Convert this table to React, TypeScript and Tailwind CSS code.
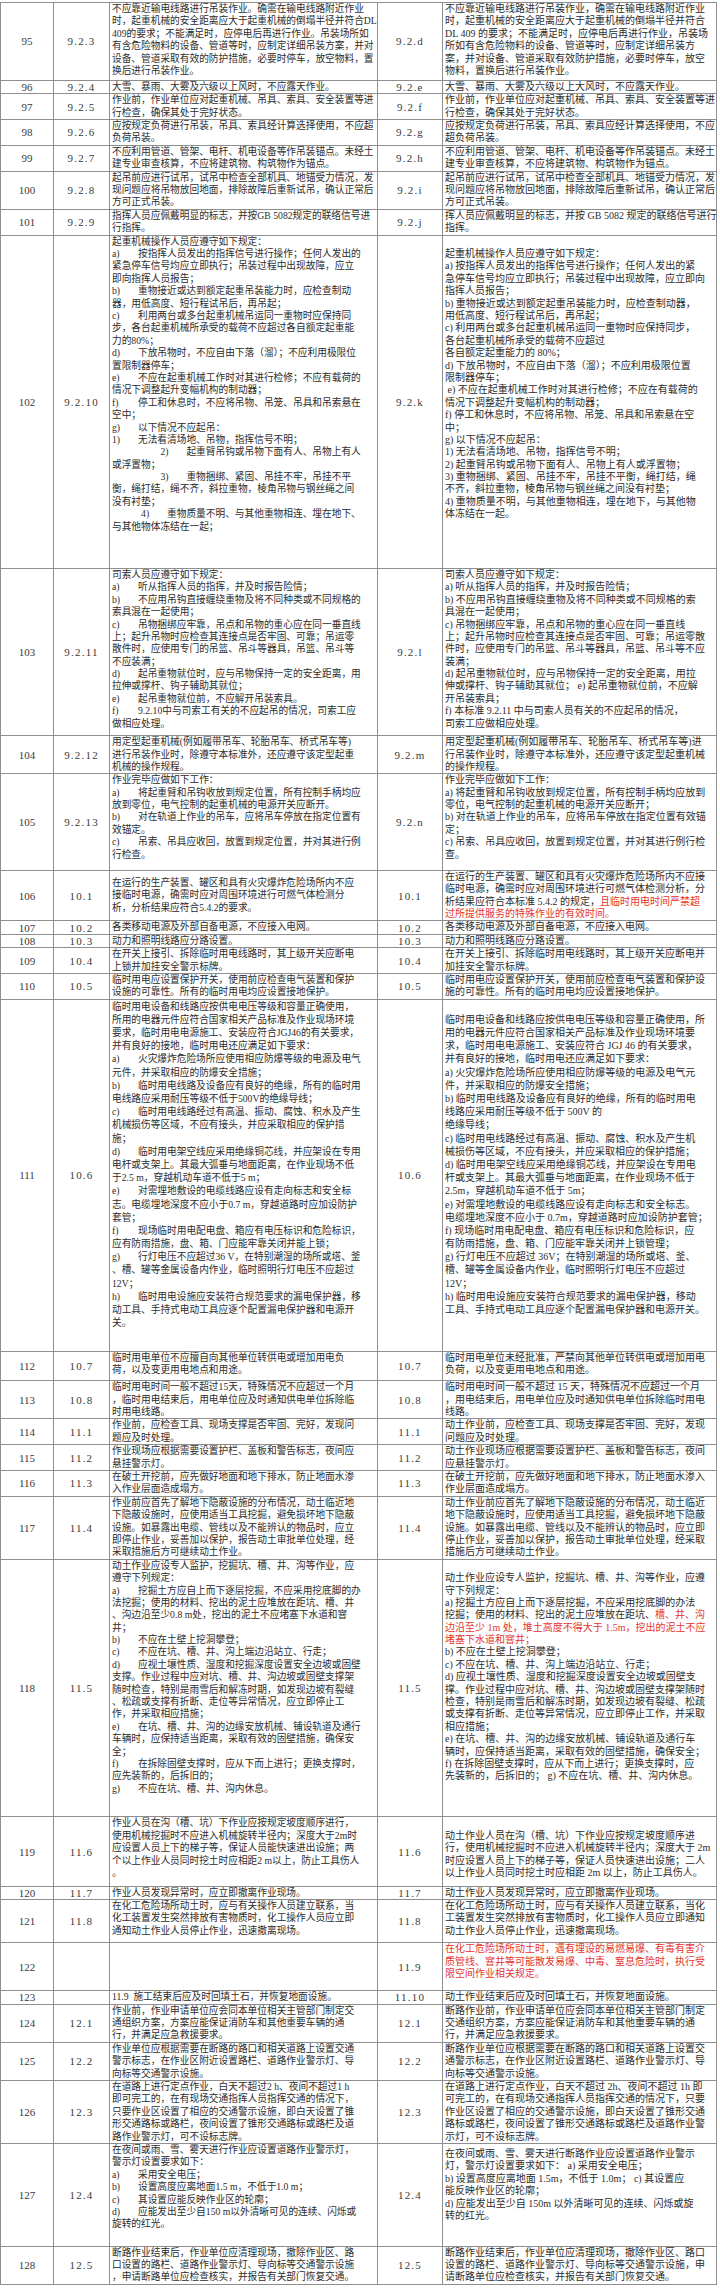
import React from "react";

type Row = {
  n: string;
  a: string;
  b: string;
  l: string[];
  r: string[];
  h?: number; // minimum row height, in line slots
  lh?: number; // line spacing for this row
  lc?: boolean; // centre the left text vertically
  rt?: boolean; // small top offset on the right text
};

const LH = 12.4;

const rows: Row[] = [
  {
    n: "95", a: "9.2.3", b: "9.2.d",
    l: [
      "不应靠近输电线路进行吊装作业。确需在输电线路附近作业",
      "时，起重机械的安全距离应大于起重机械的倒塌半径并符合DL",
      "409的要求；不能满足时，应停电后再进行作业。吊装场所如",
      "有含危险物料的设备、管道等时，应制定详细吊装方案，并对",
      "设备、管道采取有效的防护措施，必要时停车，放空物料，置",
      "换后进行吊装作业。",
    ],
    r: [
      "不应靠近输电线路进行吊装作业，确需在输电线路附近作业",
      "时，起重机械的安全距离应大于起重机械的倒塌半径并符合",
      "DL 409 的要求；不能满足时，应停电后再进行作业，吊装场",
      "所如有含危险物料的设备、管道等时，应制定详细吊装方",
      "案，并对设备、管道采取有效防护措施，必要时停车，放空",
      "物料，置换后进行吊装作业。",
    ],
    h: 6.2,
  },
  {
    n: "96", a: "9.2.4", b: "9.2.e",
    l: ["大雪、暴雨、大雾及六级以上风时，不应露天作业。"],
    r: ["大雪、暴雨、大雾及六级以上大风时，不应露天作业。"],
  },
  {
    n: "97", a: "9.2.5", b: "9.2.f",
    l: ["作业前，作业单位应对起重机械、吊具、索具、安全装置等进", "行检查，确保其处于完好状态。"],
    r: ["作业前，作业单位应对起重机械、吊具、索具、安全装置等进", "行检查，确保其处于完好状态。"],
  },
  {
    n: "98", a: "9.2.6", b: "9.2.g",
    l: ["应按规定负荷进行吊装，吊具、索具经计算选择使用，不应超", "负荷吊装。"],
    r: ["应按规定负荷进行吊装，吊具、索具应经计算选择使用，不应", "超负荷吊装。"],
  },
  {
    n: "99", a: "9.2.7", b: "9.2.h",
    l: ["不应利用管道、管架、电杆、机电设备等作吊装锚点。未经土", "建专业审查核算，不应将建筑物、构筑物作为锚点。"],
    r: ["不应利用管道、管架、电杆、机电设备等作吊装锚点。未经土", "建专业审查核算，不应将建筑物、构筑物作为锚点。"],
  },
  {
    n: "100", a: "9.2.8", b: "9.2.i",
    l: [
      "起吊前应进行试吊，试吊中检查全部机具、地锚受力情况，发",
      "现问题应将吊物放回地面，排除故障后重新试吊，确认正常后",
      "方可正式吊装。",
    ],
    r: [
      "起吊前应进行试吊，试吊中检查全部机具、地锚受力情况，发",
      "现问题应将吊物放回地面，排除故障后重新试吊，确认正常后",
      "方可正式吊装。",
    ],
  },
  {
    n: "101", a: "9.2.9", b: "9.2.j",
    l: ["指挥人员应佩戴明显的标志，并按GB 5082规定的联络信号进", "行指挥。"],
    r: ["挥人员应佩戴明显的标志，并按 GB 5082 规定的联络信号进行", "指挥。"],
  },
  {
    n: "102", a: "9.2.10", b: "9.2.k",
    l: [
      "起重机械操作人员应遵守如下规定：",
      "a)    按指挥人员发出的指挥信号进行操作；任何人发出的",
      "紧急停车信号均应立即执行；吊装过程中出现故障，应立",
      "即向指挥人员报告；",
      "b)    重物接近或达到额定起重吊装能力时，应检查制动",
      "器，用低高度、短行程试吊后，再吊起；",
      "c)    利用两台或多台起重机械吊运同一重物时应保持同",
      "步，各台起重机械所承受的载荷不应超过各自额定起重能",
      "力的80%；",
      "d)    下放吊物时，不应自由下落（溜）；不应利用极限位",
      "置限制器停车；",
      "e)    不应在起重机械工作时对其进行检修；不应有载荷的",
      "情况下调整起升变幅机构的制动器；",
      "f)    停工和休息时，不应将吊物、吊笼、吊具和吊索悬在",
      "空中；",
      "g)    以下情况不应起吊：",
      "1)    无法看清场地、吊物，指挥信号不明；",
      "　　　　　2)    起重臂吊钩或吊物下面有人、吊物上有人",
      "或浮置物；",
      "　　　　　3)    重物捆绑、紧固、吊挂不牢，吊挂不平",
      "衡，绳打结，绳不齐，斜拉重物，棱角吊物与钢丝绳之间",
      "没有衬垫；",
      "　　　4)    重物质量不明、与其他重物相连、埋在地下、",
      "与其他物体冻结在一起；",
    ],
    r: [
      "",
      "起重机械操作人员应遵守如下规定：",
      "a) 按指挥人员发出的指挥信号进行操作；任何人发出的紧",
      "急停车信号均应立即执行；吊装过程中出现故障，应立即向",
      "指挥人员报告；",
      "b) 重物接近或达到额定起重吊装能力时，应检查制动器，",
      "用低高度、短行程试吊后，再吊起；",
      "c) 利用两台或多台起重机械吊运同一重物时应保持同步，",
      "各台起重机械所承受的载荷不应超过",
      "各自额定起重能力的 80%；",
      "d) 下放吊物时，不应自由下落（溜）；不应利用极限位置",
      "限制器停车；",
      " e) 不应在起重机械工作时对其进行检修；不应在有载荷的",
      "情况下调整起升变幅机构的制动器；",
      "f) 停工和休息时，不应将吊物、吊笼、吊具和吊索悬在空",
      "中；",
      "g) 以下情况不应起吊：",
      "1) 无法看清场地、吊物，指挥信号不明；",
      "2) 起重臂吊钩或吊物下面有人、吊物上有人或浮置物；",
      "3) 重物捆绑、紧固、吊挂不牢，吊挂不平衡，绳打结，绳",
      "不齐，斜拉重物，棱角吊物与钢丝绳之间没有衬垫；",
      "4) 重物质量不明，与其他重物相连，埋在地下，与其他物",
      "体冻结在一起。",
    ],
    h: 26.8,
  },
  {
    n: "103", a: "9.2.11", b: "9.2.l",
    l: [
      "司索人员应遵守如下规定：",
      "a)    听从指挥人员的指挥，并及时报告险情；",
      "b)    不应用吊钩直接缠绕重物及将不同种类或不同规格的",
      "索具混在一起使用；",
      "c)    吊物捆绑应牢靠，吊点和吊物的重心应在同一垂直线",
      "上；起升吊物时应检查其连接点是否牢固、可靠；吊运零",
      "散件时，应使用专门的吊篮、吊斗等器具，吊篮、吊斗等",
      "不应装满；",
      "d)    起吊重物就位时，应与吊物保持一定的安全距离，用",
      "拉伸或撑杆、钩子辅助其就位；",
      "e)    起吊重物就位前，不应解开吊装索具。",
      "f)    9.2.10中与司索工有关的不应起吊的情况，司索工应",
      "做相应处理。",
    ],
    r: [
      "司索人员应遵守如下规定：",
      "a) 听从指挥人员的指挥，并及时报告险情；",
      "b) 不应用吊钩直接缠绕重物及将不同种类或不同规格的索",
      "具混在一起使用；",
      "c) 吊物捆绑应牢靠，吊点和吊物的重心应在同一垂直线",
      "上；起升吊物时应检查其连接点是否牢固、可靠；吊运零散",
      "件时，应使用专门的吊篮、吊斗等器具，吊篮、吊斗等不应",
      "装满；",
      "d) 起吊重物就位时，应与吊物保持一定的安全距离，用拉",
      "伸或撑杆、钩子辅助其就位； e) 起吊重物就位前，不应解",
      "开吊装索具；",
      "f) 本标准 9.2.11 中与司索人员有关的不应起吊的情况，",
      "司索工应做相应处理。",
    ],
    h: 13.4,
  },
  {
    n: "104", a: "9.2.12", b: "9.2.m",
    l: [
      "用定型起重机械(例如履带吊车、轮胎吊车、桥式吊车等)",
      "进行吊装作业时，除遵守本标准外，还应遵守该定型起重",
      "机械的操作规程。",
    ],
    r: [
      "用定型起重机械(例如履带吊车、轮胎吊车、桥式吊车等)进",
      "行吊装作业时，除遵守本标准外，还应遵守该定型起重机械",
      "的操作规程。",
    ],
  },
  {
    n: "105", a: "9.2.13", b: "9.2.n",
    l: [
      "作业完毕应做如下工作：",
      "a)    将起重臂和吊钩收放到规定位置，所有控制手柄均应",
      "放到零位，电气控制的起重机械的电源开关应断开。",
      "b)    对在轨道上作业的吊车，应将吊车停放在指定位置有",
      "效锚定。",
      "c)    吊索、吊具应收回，放置到规定位置，并对其进行例",
      "行检查。",
    ],
    r: [
      "作业完毕应做如下工作：",
      "a) 将起重臂和吊钩收放到规定位置，所有控制手柄均应放到",
      "零位，电气控制的起重机械的电源开关应断开；",
      "b) 对在轨道上作业的吊车，应将吊车停放在指定位置有效锚",
      "定；",
      "c) 吊索、吊具应收回，放置到规定位置，并对其进行例行检",
      "查。",
    ],
    h: 7.7,
  },
  {
    n: "106", a: "10.1", b: "10.1",
    l: [
      "在运行的生产装置、罐区和具有火灾爆炸危险场所内不应",
      "接临时电源，确需时应对周围环境进行可燃气体检测分",
      "析，分析结果应符合5.4.2的要求。",
    ],
    r: [
      "在运行的生产装置、罐区和具有火灾爆炸危险场所内不应接",
      "临时电源，确需时应对周围环境进行可燃气体检测分析，分",
      "析结果应符合本标准 5.4.2 的规定，§且临时用电时间严禁超",
      "§过所提供服务的特殊作业的有效时间。",
    ],
    h: 4,
    lc: true,
  },
  {
    n: "107", a: "10.2", b: "10.2",
    l: ["各类移动电源及外部自备电源，不应接入电网。"],
    r: ["各类移动电源及外部自备电源，不应接入电网。"],
  },
  {
    n: "108", a: "10.3", b: "10.3",
    l: ["动力和照明线路应分路设置。"],
    r: ["动力和照明线路应分路设置。"],
  },
  {
    n: "109", a: "10.4", b: "10.4",
    l: ["在开关上接引、拆除临时用电线路时，其上级开关应断电", "上锁并加挂安全警示标牌。"],
    r: ["在开关上接引、拆除临时用电线路时，其上级开关应断电并", "加挂安全警示标牌。"],
  },
  {
    n: "110", a: "10.5", b: "10.5",
    l: ["临时用电应设置保护开关，使用前应检查电气装置和保护", "设施的可靠性。所有的临时用电均应设置接地保护。"],
    r: ["临时用电应设置保护开关，使用前应检查电气装置和保护设", "施的可靠性。所有的临时用电均应设置接地保护。"],
  },
  {
    n: "111", a: "10.6", b: "10.6",
    l: [
      "临时用电设备和线路应按供电电压等级和容量正确使用，",
      "所用的电器元件应符合国家相关产品标准及作业现场环境",
      "要求，临时用电电源施工、安装应符合JGJ46的有关要求，",
      "并有良好的接地，临时用电还应满足如下要求：",
      "a)    火灾爆炸危险场所应使用相应防爆等级的电源及电气",
      "元件，并采取相应的防爆安全措施；",
      "b)    临时用电线路及设备应有良好的绝缘，所有的临时用",
      "电线路应采用耐压等级不低于500V的绝缘导线；",
      "c)    临时用电线路经过有高温、振动、腐蚀、积水及产生",
      "机械损伤等区域，不应有接头，并应采取相应的保护措",
      "施；",
      "d)    临时用电架空线应采用绝缘铜芯线，并应架设在专用",
      "电杆或支架上。其最大弧垂与地面距离，在作业现场不低",
      "于2.5 m，穿越机动车道不低于5 m；",
      "e)    对需埋地敷设的电缆线路应设有走向标志和安全标",
      "志。电缆埋地深度不应小于0.7 m，穿越道路时应加设防护",
      "套管；",
      "f)    现场临时用电配电盘、箱应有电压标识和危险标识，",
      "应有防雨措施，盘、箱、门应能牢靠关闭并能上锁；",
      "g)    行灯电压不应超过36 V，在特别潮湿的场所或塔、釜",
      "、槽、罐等金属设备内作业，临时照明行灯电压不应超过",
      "12V；",
      "h)    临时用电设施应安装符合规范要求的漏电保护器，移",
      "动工具、手持式电动工具应逐个配置漏电保护器和电源开",
      "关。",
    ],
    r: [
      "",
      "临时用电设备和线路应按供电电压等级和容量正确使用，所",
      "用的电器元件应符合国家相关产品标准及作业现场环境要",
      "求，临时用电电源施工、安装应符合 JGJ 46 的有关要求，",
      "并有良好的接地，临时用电还应满足如下要求：",
      "a) 火灾爆炸危险场所应使用相应防爆等级的电源及电气元",
      "件，并采取相应的防爆安全措施；",
      "b) 临时用电线路及设备应有良好的绝缘，所有的临时用电",
      "线路应采用耐压等级不低于 500V 的",
      "绝缘导线；",
      "c) 临时用电线路经过有高温、振动、腐蚀、积水及产生机",
      "械损伤等区域，不应有接头，并应采取相应的保护措施；",
      "d) 临时用电架空线应采用绝缘铜芯线，并应架设在专用电",
      "杆或支架上。其最大弧垂与地面距离，在作业现场不低于",
      "2.5m，穿越机动车道不低于 5m；",
      "e) 对需埋地敷设的电缆线路应设有走向标志和安全标志。",
      "电缆埋地深度不应小于 0.7m，穿越道路时应加设防护套管；",
      "f) 现场临时用电配电盘、箱应有电压标识和危险标识，应",
      "有防雨措施，盘、箱、门应能牢靠关闭并上锁管理；",
      "g) 行灯电压不应超过 36V；在特别潮湿的场所或塔、釜、",
      "槽、罐等金属设备内作业，临时照明行灯电压不应超过",
      "12V；",
      "h) 临时用电设施应安装符合规范要求的漏电保护器，移动",
      "工具、手持式电动工具应逐个配置漏电保护器和电源开关。",
    ],
    h: 28.3,
    lh: 13.2,
  },
  {
    n: "112", a: "10.7", b: "10.7",
    l: ["临时用电单位不应擅自向其他单位转供电或增加用电负", "荷，以及变更用电地点和用途。"],
    r: ["临时用电单位未经批准，严禁向其他单位转供电或增加用电", "负荷，以及变更用电地点和用途。"],
    h: 2.3,
  },
  {
    n: "113", a: "10.8", b: "10.8",
    l: [
      "临时用电时间一般不超过15天，特殊情况不应超过一个月",
      "，临时用电结束后，用电单位应及时通知供电单位拆除临",
      "时用电线路。",
    ],
    r: [
      "临时用电时间一般不超过 15 天，特殊情况不应超过一个月",
      "，用电结束后，用电单位应及时通知供电单位拆除临时用电",
      "线路。",
    ],
  },
  {
    n: "114", a: "11.1", b: "11.1",
    l: ["作业前，应检查工具、现场支撑是否牢固、完好，发现问", "题应及时处理。"],
    r: ["动土作业前，应检查工具、现场支撑是否牢固、完好，发现", "问题应及时处理。"],
  },
  {
    n: "115", a: "11.2", b: "11.2",
    l: ["作业现场应根据需要设置护栏、盖板和警告标志，夜间应", "悬挂警示灯。"],
    r: ["动土作业现场应根据需要设置护栏、盖板和警告标志，夜间", "应悬挂警示灯。"],
  },
  {
    n: "116", a: "11.3", b: "11.3",
    l: ["在破土开挖前，应先做好地面和地下排水，防止地面水渗", "入作业层面造成塌方。"],
    r: ["在破土开挖前，应先做好地面和地下排水，防止地面水渗入", "作业层面造成塌方。"],
  },
  {
    n: "117", a: "11.4", b: "11.4",
    l: [
      "作业前应首先了解地下隐蔽设施的分布情况，动土临近地",
      "下隐蔽设施时，应使用适当工具挖掘，避免损坏地下隐蔽",
      "设施。如暴露出电缆、管线以及不能辨认的物品时，应立",
      "即停止作业，妥善加以保护，报告动土审批单位处理，经",
      "采取措施后方可继续动土作业。",
    ],
    r: [
      "动土作业前应首先了解地下隐蔽设施的分布情况，动土临近",
      "地下隐蔽设施时，应使用适当工具挖掘，避免损坏地下隐蔽",
      "设施。如暴露出电缆、管线以及不能辨认的物品时，应立即",
      "停止作业，妥善加以保护，报告动土审批单位处理，经采取",
      "措施后方可继续动土作业。",
    ],
  },
  {
    n: "118", a: "11.5", b: "11.5",
    l: [
      "动土作业应设专人监护，挖掘坑、槽、井、沟等作业，应",
      "遵守下列规定：",
      "a)    挖掘土方应自上而下逐层挖掘，不应采用挖底脚的办",
      "法挖掘；使用的材料、挖出的泥土应堆放在距坑、槽、井",
      "、沟边沿至少0.8 m处，挖出的泥土不应堵塞下水道和窨",
      "井；",
      "b)    不应在土壁上挖洞攀登；",
      "c)    不应在坑、槽、井、沟上端边沿站立、行走；",
      "d)    应视土壤性质、湿度和挖掘深度设置安全边坡或固壁",
      "支撑。作业过程中应对坑、槽、井、沟边坡或固壁支撑架",
      "随时检查，特别是雨雪后和解冻时期，如发现边坡有裂缝",
      "、松疏或支撑有折断、走位等异常情况，应立即停止工",
      "作，并采取相应措施；",
      "e)    在坑、槽、井、沟的边缘安放机械、铺设轨道及通行",
      "车辆时，应保持适当距离，采取有效的固壁措施，确保安",
      "全；",
      "f)    在拆除固壁支撑时，应从下而上进行；更换支撑时，",
      "应先装新的，后拆旧的；",
      "g)    不应在坑、槽、井、沟内休息。",
    ],
    r: [
      "",
      "动土作业应设专人监护，挖掘坑、槽、井、沟等作业，应遵",
      "守下列规定：",
      "a) 挖掘土方应自上而下逐层挖掘，不应采用挖底脚的办法",
      "挖掘；使用的材料、挖出的泥土应堆放在距坑、§槽、井、沟",
      "§边沿至少 1m 处，堆土高度不得大于 1.5m，挖出的泥土不应",
      "§堵塞下水道和窨井；",
      "b) 不应在土壁上挖洞攀登；",
      "c) 不应在坑、槽、井、沟上端边沿站立、行走；",
      "d) 应视土壤性质、湿度和挖掘深度设置安全边坡或固壁支",
      "撑。作业过程中应对坑、槽、井、沟边坡或固壁支撑架随时",
      "检查，特别是雨雪后和解冻时期，如发现边坡有裂缝、松疏",
      "或支撑有折断、走位等异常情况，应立即停止工作，并采取",
      "相应措施；",
      "e) 在坑、槽、井、沟的边缘安放机械、铺设轨道及通行车",
      "辆时，应保持适当距离，采取有效的固壁措施，确保安全；",
      "f) 在拆除固壁支撑时，应从下而上进行；更换支撑时，应",
      "先装新的，后拆旧的； g) 不应在坑、槽、井、沟内休息。",
    ],
    h: 20.7,
  },
  {
    n: "119", a: "11.6", b: "11.6",
    l: [
      "作业人员在沟（槽、坑）下作业应按规定坡度顺序进行，",
      "使用机械挖掘时不应进入机械旋转半径内；深度大于2m时",
      "应设置人员上下的梯子等，保证人员能快速进出设施；两",
      "个以上作业人员同时挖土时应相距2 m以上，防止工具伤人",
      "。",
    ],
    r: [
      "",
      "动土作业人员在沟（槽、坑）下作业应按规定坡度顺序进",
      "行，使用机械挖掘时不应进入机械旋转半径内；深度大于 2m",
      "时应设置人员上下的梯子等，保证人员快速进出设施；二人",
      "以上作业人员同时挖土时应相距 2m 以上，防止工具伤人。",
    ],
    h: 5.5,
  },
  {
    n: "120", a: "11.7", b: "11.7",
    l: ["作业人员发现异常时，应立即撤离作业现场。"],
    r: ["动土作业人员发现异常时，应立即撤离作业现场。"],
  },
  {
    n: "121", a: "11.8", b: "11.8",
    l: [
      "在化工危险场所动土时，应与有关操作人员建立联系，当",
      "化工装置发生突然排放有害物质时，化工操作人员应立即",
      "通知动土作业人员停止作业，迅速撤离现场。",
    ],
    r: [
      "在化工危险场所动土时，应与有关操作人员建立联系，当化",
      "工装置发生突然排放有害物质时，化工操作人员应立即通知",
      "动土作业人员停止作业，迅速撤离现场。",
    ],
    h: 3.4,
  },
  {
    n: "122", a: "", b: "11.9",
    l: [],
    r: [
      "§在化工危险场所动土时，遇有埋设的易燃易爆、有毒有害介",
      "§质管线、窨井等可能散发易爆、中毒、窒息危险时，执行受",
      "§限空间作业相关规定。",
    ],
    h: 3.8,
  },
  {
    n: "123", a: "", b: "11.10",
    l: ["11.9  施工结束后应及时回填土石，并恢复地面设施。"],
    r: ["动土作业结束后应及时回填土石，并恢复地面设施。"],
  },
  {
    n: "124", a: "12.1", b: "12.1",
    l: [
      "作业前，作业申请单位应会同本单位相关主管部门制定交",
      "通组织方案，方案应能保证消防车和其他重要车辆的通",
      "行，并满足应急救援要求。",
    ],
    r: [
      "断路作业前，作业申请单位应会同本单位相关主管部门制定",
      "交通组织方案，方案应能保证消防车和其他重要车辆的通",
      "行，并满足应急救援要求。",
    ],
  },
  {
    n: "125", a: "12.2", b: "12.2",
    l: [
      "作业单位应根据需要在断路的路口和相关道路上设置交通",
      "警示标志，在作业区附近设置路栏、道路作业警示灯、导",
      "向标等交通警示设施。",
    ],
    r: [
      "断路作业单位应根据需要在断路的路口和相关道路上设置交",
      "通警示标志，在作业区附近设置路栏、道路作业警示灯、导",
      "向标等交通警示设施。",
    ],
  },
  {
    n: "126", a: "12.3", b: "12.3",
    l: [
      "在道路上进行定点作业，白天不超过2 h、夜间不超过1 h",
      "即可完工的，在有现场交通指挥人员指挥交通的情况下，",
      "只要作业区设置了相应的交通警示设施，即白天设置了锥",
      "形交通路标或路栏，夜间设置了锥形交通路标或路栏及道",
      "路作业警示灯，可不设标志牌。",
    ],
    r: [
      "在道路上进行定点作业，白天不超过 2h、夜间不超过 1h 即",
      "可完工的，在有现场交通指挥人员指挥交通的情况下，只要",
      "作业区设置了相应的交通警示设施，即白天设置了锥形交通",
      "路标或路栏，夜间设置了锥形交通路标或路栏及道路作业警",
      "示灯，可不设标志牌。",
    ],
  },
  {
    n: "127", a: "12.4", b: "12.4",
    l: [
      "在夜间或雨、雪、雾天进行作业应设置道路作业警示灯，",
      "警示灯设置要求如下：",
      "a)    采用安全电压；",
      "b)    设置高度应离地面1.5 m，不低于1.0 m；",
      "c)    其设置应能反映作业区的轮廓；",
      "d)    应能发出至少自150 m以外清晰可见的连续、闪烁或",
      "旋转的红光。",
    ],
    r: [
      "在夜间或雨、雪、雾天进行断路作业应设置道路作业警示",
      "灯，警示灯设置要求如下： a) 采用安全电压；",
      "b) 设置高度应离地面 1.5m，不低于 1.0m； c) 其设置应",
      "能反映作业区的轮廓；",
      "d) 应能发出至少自 150m 以外清晰可见的连续、闪烁或旋",
      "转的红光。",
    ],
    h: 8.2,
    rt: true,
  },
  {
    n: "128", a: "12.5", b: "12.5",
    l: [
      "断路作业结束后，作业单位应清理现场，撤除作业区、路",
      "口设置的路栏、道路作业警示灯、导向标等交通警示设施",
      "，申请断路单位应检查核实，并报告有关部门恢复交通。",
    ],
    r: [
      "断路作业结束后，作业单位应清理现场，撤除作业区、路口",
      "设置的路栏、道路作业警示灯、导向标等交通警示设施，申",
      "请断路单位应检查核实，并报告有关部门恢复交通。",
    ],
  },
];

function Seg({ text }: { text: string }) {
  const parts = text.split("§");
  return (
    <>
      {parts.map((p, i) =>
        i % 2 ? (
          <span key={i} className="text-[#e5352c]">{p}</span>
        ) : (
          <React.Fragment key={i}>{p}</React.Fragment>
        )
      )}
    </>
  );
}

function TextLine({ text, lh }: { text: string; lh: number }) {
  const m = text.match(/^([\u3000 ]*)([a-h1-4]\))\s{3,}(.*)$/);
  return (
    <div className="shrink-0 whitespace-pre" style={{ height: lh, lineHeight: `${lh}px` }}>
      {m ? (
        <>
          {m[1]}
          <span className="inline-block w-[26px]">{m[2]}</span>
          <Seg text={m[3]} />
        </>
      ) : (
        <Seg text={text || " "} />
      )}
    </div>
  );
}

function TableRow({ row }: { row: Row }) {
  const lh = row.lh ?? LH;
  const slots = Math.max(row.h ?? 0, row.l.length, row.r.length);
  return (
    <div
      className="grid grid-cols-[53px_56px_268px_65px_274px] border-b border-[#8e8e8e] leading-[12px]"
      style={{ minHeight: slots * LH + 1 }}
    >
      <div className="flex items-center justify-center border-r border-[#8e8e8e] text-[11px] leading-[12px] text-[#3a3a3a]">
        {row.n}
      </div>
      <div className="flex items-center justify-center border-r border-[#8e8e8e] text-[11px] leading-[12px] tracking-[1.2px] text-[#3a3a3a]">
        {row.a}
      </div>
      <div
        className={`flex flex-col border-r border-[#8e8e8e] px-[2px] text-[9.7px] ${
          row.lc ? "justify-center" : "justify-start"
        }`}
      >
        {row.l.map((t, i) => (
          <TextLine key={i} text={t} lh={lh} />
        ))}
      </div>
      <div className="flex items-center justify-center border-r border-[#8e8e8e] text-[11px] leading-[12px] tracking-[1.2px] text-[#3a3a3a]">
        {row.b}
      </div>
      <div
        className={`flex flex-col border-r border-[#8e8e8e] px-[2px] text-[10px] ${
          row.rt ? "pt-[4px]" : "pt-0"
        }`}
      >
        {row.r.map((t, i) => (
          <TextLine key={i} text={t} lh={lh} />
        ))}
      </div>
    </div>
  );
}

export default function App() {
  return (
    <div className="w-[720px] bg-white pt-[2px] font-['Liberation_Serif','Noto_Sans_CJK_SC',serif] text-[#2c2c2c]">
      <div className="w-[717px] border-l border-t border-[#8e8e8e]">
        {rows.map((row) => (
          <TableRow key={row.n} row={row} />
        ))}
      </div>
    </div>
  );
}
